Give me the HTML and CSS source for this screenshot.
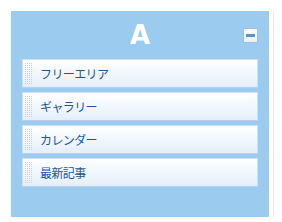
FILE: index.html
```html
<!DOCTYPE html>
<html lang="ja">
<head>
    <meta charset="UTF-8">
    <meta name="viewport" content="width=device-width, initial-scale=1.0">
    <title>Sidebar A</title>
    <link rel="stylesheet" href="styles.css">
</head>
<body>

    <div class="layout">
        <div class="sidebar">
            <div class="sidebar-head">
                <h2>A</h2>
                <button class="toggle-btn" title="閉じる"><span></span></button>
            </div>

            <ul class="widget-list">
                <li class="widget"><span class="grip"></span>フリーエリア</li>
                <li class="widget"><span class="grip"></span>ギャラリー</li>
                <li class="widget"><span class="grip"></span>カレンダー</li>
                <li class="widget"><span class="grip"></span>最新記事</li>
            </ul>
        </div>

        <div class="next-column"></div>
    </div>

</body>
</html>
```

FILE: styles.css
```css
body {
    margin: 0;
    background-color: #fff;
    font-family: "Noto Sans CJK JP", "Noto Sans", sans-serif;
}
.layout {
    display: flex;
    padding: 11px 0 5px 11px;
}
.sidebar {
    width: 260px;
    height: 206px;
    background: #9ccbf0;
    box-sizing: border-box;
}
.sidebar-head {
    position: relative;
    height: 48px;
}
.sidebar-head h2 {
    margin: 0;
    padding-top: 9px;
    text-align: center;
    font-family: "DejaVu Sans", sans-serif;
    font-size: 26px;
    font-weight: bold;
    line-height: 30px;
    color: #fff;
}
.toggle-btn {
    position: absolute;
    top: 17px;
    right: 11px;
    width: 15px;
    height: 15px;
    padding: 0;
    border: 1px solid #9dbfe2;
    background: linear-gradient(#f9fcff, #e6f1fc);
    display: flex;
    align-items: center;
    justify-content: center;
    cursor: pointer;
}
.toggle-btn span {
    display: block;
    width: 9px;
    height: 3px;
    background: #6690c2;
}
.widget-list {
    list-style: none;
    margin: 0;
    padding: 0 11px;
    display: flex;
    flex-direction: column;
    gap: 4px;
}
.widget {
    height: 29px;
    box-sizing: border-box;
    display: flex;
    align-items: center;
    border: 1px solid #cde1f3;
    border-bottom-color: #b5d0ea;
    background: linear-gradient(#ffffff, #e4effb);
    font-size: 12px;
    letter-spacing: -0.6px;
    color: #1d5597;
}
.grip {
    width: 8px;
    height: 22px;
    margin: 0 8px 0 1px;
    background: conic-gradient(#c6d2de 25%, transparent 0) 0 0 / 2px 2px;
}
.next-column {
    margin-left: 4px;
    width: 8px;
    height: 206px;
    border-left: 1px solid #e3eef8;
}
```
